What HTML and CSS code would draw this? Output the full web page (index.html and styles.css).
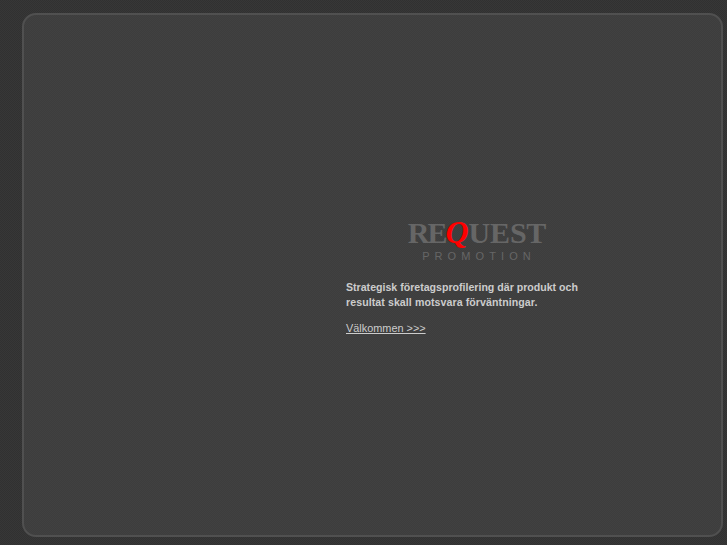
FILE: index.html
```html
<!DOCTYPE html>
<html lang="sv">
<head>
<meta charset="utf-8">
<title>Request Promotion</title>
<link rel="stylesheet" href="styles.css">
</head>
<body>
<main class="panel">
  <section class="intro">
    <div class="logo">
      <div class="logo-word"><span class="logo-re">RE</span><span class="logo-q">Q</span><span class="logo-rest">UEST</span></div>
      <div class="logo-sub">PROMOTION</div>
    </div>
    <p class="lead">Strategisk företagsprofilering där produkt och<br><span class="lead-second">resultat skall motsvara förväntningar.</span></p>
    <a class="enter" href="#">Välkommen &gt;&gt;&gt;</a>
  </section>
</main>
</body>
</html>
```
FILE: styles.css
```css
html, body {
  margin: 0;
  height: 100%;
}
body {
  background: repeating-conic-gradient(#373737 0 25%, #313131 0 50%) 0 0 / 2px 2px;
  display: flex;
  box-sizing: border-box;
  padding: 13px 4px 8px 22px;
  font-family: "Liberation Sans", Arial, sans-serif;
  overflow: hidden;
}
.panel {
  flex: 1;
  box-sizing: border-box;
  background: repeating-conic-gradient(#414141 0 25%, #3d3d3d 0 50%) 0 0 / 2px 2px;
  border: 2px solid #505050;
  border-radius: 14px;
  display: flex;
  padding: 204px 0 0 322px;
}
.intro {
  width: 250px;
}
.logo {
  width: 260px;
  margin-left: 3px;
  text-align: center;
}
.logo-word {
  font-family: "Liberation Serif", "Times New Roman", serif;
  font-weight: bold;
  font-size: 30px;
  line-height: 27px;
  color: #666;
  white-space: nowrap;
  margin-left: -4px;
}
.logo-re {
  letter-spacing: -2px;
}
.logo-rest {
  letter-spacing: -0.2px;
}
.logo-q {
  color: #f00;
  font-style: italic;
  font-size: 32px;
  line-height: 27px;
}
.logo-sub {
  font-size: 11px;
  line-height: 13px;
  letter-spacing: 5.1px;
  color: #666;
  margin-top: 4px;
}
.lead {
  margin: 17px 0 0;
  font-size: 10.6px;
  line-height: 15px;
  font-weight: bold;
  color: #ccc;
  white-space: nowrap;
}
.lead-second {
  letter-spacing: 0.08px;
}
.enter {
  display: inline-block;
  margin-top: 12px;
  font-size: 10.9px;
  line-height: 13px;
  color: #ccc;
}
```
